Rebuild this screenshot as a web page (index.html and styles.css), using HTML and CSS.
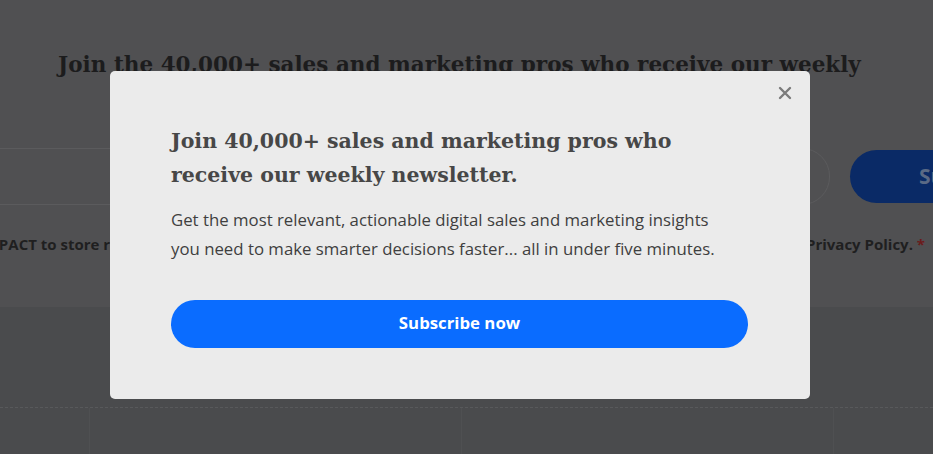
FILE: index.html
```html
<!DOCTYPE html>
<html lang="en">
<head>
<meta charset="utf-8">
<title>Newsletter</title>
<link rel="stylesheet" href="styles.css">
</head>
<body>
<div class="page">
  <section class="hero">
    <h2 class="hero-title">Join the 40,000+ sales and marketing pros who receive our weekly</h2>
    <form class="signup">
      <div class="field"></div>
      <div class="signup-btn">Subscribe</div>
    </form>
    <div class="consent">
      <span class="consent-left">I agree to allow IMPACT to store relevant</span>
      <span class="consent-right">per the Privacy Policy. <em class="req">*</em></span>
    </div>
  </section>
  <section class="lower">
    <div class="cards">
      <div class="card"></div>
      <div class="card"></div>
      <div class="card"></div>
      <div class="card"></div>
    </div>
  </section>
</div>

<div class="modal" role="dialog">
  <button class="close" aria-label="Close">
    <svg width="14" height="14" viewBox="0 0 14 14"><path d="M2 2 L12 12 M12 2 L2 12" stroke="#7b7b7b" stroke-width="2.4" stroke-linecap="round"/></svg>
  </button>
  <h3 class="modal-title">Join 40,000+ sales and marketing pros who receive our weekly newsletter.</h3>
  <p class="modal-text">Get the most relevant, actionable digital sales and marketing insights you need to make smarter decisions faster... all in under five minutes.</p>
  <a class="modal-btn" href="#">Subscribe now</a>
</div>
</body>
</html>
```

FILE: styles.css
```css
html, body {
  margin: 0;
  padding: 0;
}
body {
  width: 933px;
  height: 454px;
  overflow: hidden;
  background: #4a4b4d;
  font-family: "Open Sans", "Liberation Sans", sans-serif;
}
.page {
  display: flex;
  flex-direction: column;
}
.hero {
  height: 307px;
  background: #505052;
  display: flex;
  flex-direction: column;
  overflow: hidden;
}
.hero-title {
  margin: 47px 0 0;
  text-align: center;
  font-family: "DejaVu Serif", serif;
  font-weight: bold;
  font-size: 21.5px;
  line-height: 36px;
  color: #1c1c1d;
  white-space: nowrap;
  padding-right: 14px;
}
.signup {
  display: flex;
  align-items: center;
  gap: 20px;
  margin: 65px 0 0 -40px;
}
.field {
  width: 870px;
  height: 57px;
  box-sizing: border-box;
  border: 1px solid #5b5b5d;
  border-radius: 28px;
  flex: none;
}
.signup-btn {
  flex: none;
  width: 200px;
  height: 53px;
  border-radius: 27px;
  background: #0a2a66;
  color: #5b6a85;
  font-family: "Open Sans", sans-serif;
  font-weight: 700;
  font-size: 21px;
  line-height: 53px;
  padding-left: 69px;
  box-sizing: border-box;
}
.consent {
  display: flex;
  justify-content: space-between;
  margin-top: 28px;
  font-family: "Open Sans", "Liberation Sans", sans-serif;
  font-weight: 700;
  font-size: 15px;
  line-height: 22px;
  color: #1f1f20;
  white-space: nowrap;
}
.consent-left {
  margin-left: -139px;
}
.consent-right {
  margin-right: 8px;
}
.req {
  font-style: normal;
  color: #6b1b1b;
}
.lower {
  height: 147px;
  background: #4a4b4d;
  padding-top: 100px;
  box-sizing: border-box;
}
.cards {
  border-top: 1px dashed #58595b;
  display: flex;
  height: 100%;
  padding-left: 89px;
}
.card {
  width: 371px;
  flex: none;
  border-left: 1px solid #4f5052;
}

/* modal */
.modal {
  position: fixed;
  top: 71px;
  left: 110px;
  width: 700px;
  height: 328px;
  box-sizing: border-box;
  background: #ebebeb;
  border-radius: 5px;
  padding: 53px 62px 0 61px;
  display: flex;
  flex-direction: column;
  align-items: flex-start;
}
.close {
  position: absolute;
  top: 15px;
  right: 18px;
  width: 14px;
  height: 14px;
  padding: 0;
  border: 0;
  background: none;
  display: flex;
}
.modal-title {
  margin: 0;
  font-family: "DejaVu Serif", serif;
  font-weight: bold;
  font-size: 20.5px;
  line-height: 34px;
  color: #474747;
  width: 540px;
}
.modal-text {
  margin: 13px 0 0;
  font-family: "Open Sans", sans-serif;
  font-size: 16.8px;
  line-height: 29px;
  color: #3f3f3f;
  width: 556px;
}
.modal-btn {
  margin-top: 37px;
  width: 577px;
  height: 48px;
  border-radius: 24px;
  background: #0a6cff;
  color: #fff;
  font-family: "Open Sans", sans-serif;
  font-weight: 700;
  font-size: 16.8px;
  line-height: 46px;
  text-align: center;
  text-decoration: none;
}
```
